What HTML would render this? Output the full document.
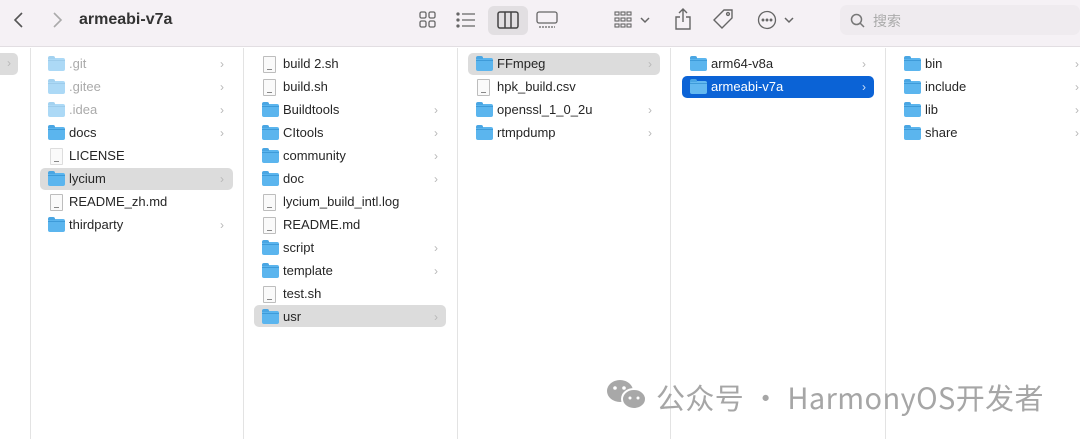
<!DOCTYPE html><html><head><meta charset="utf-8"><style>
*{margin:0;padding:0;box-sizing:border-box}
body{width:1080px;height:439px;overflow:hidden;background:#fff;font-family:"Liberation Sans","Noto Sans CJK SC",sans-serif;font-size:13px;color:#262626;position:relative}
.tb{position:absolute;left:0;top:0;width:1080px;height:47px;background:#f5f1f5;border-bottom:1px solid #e2dee2}
.col{position:absolute;top:48px;bottom:0;border-left:1px solid #e3e3e3}
.r{position:absolute;height:22px;line-height:22px;white-space:nowrap}
.sel{background:#dcdcdc;border-radius:5px}
.blue{background:#0b63d6;border-radius:5px;color:#fff}
.fd{position:absolute;width:17px;height:13px;top:5px;background:#5bb5ee;border-radius:2px}
.fd:before{content:"";position:absolute;left:0;top:-2px;width:7px;height:3px;background:#4aa6e3;border-radius:2px 2px 0 0}
.fd:after{content:"";position:absolute;left:0;top:2px;width:17px;height:1px;background:#3e9bd9}
.fl{position:absolute;width:13px;height:17px;top:3px;background:#fafafa;border:1px solid #bdbdbd;border-radius:1px}
.fl:after{content:"";position:absolute;left:3px;bottom:2px;width:5px;height:1px;background:#888}
.ch{position:absolute;color:#b8b8b8;font-size:12px}
.dim{opacity:.5}
.t{position:absolute}
</style></head><body>
<div class="tb">
<svg style="position:absolute;left:12px;top:10px" width="14" height="20"><path d="M10 3L3 10L10 17" stroke="#555" stroke-width="1.6" fill="none"/></svg>
<svg style="position:absolute;left:50px;top:10px" width="14" height="20"><path d="M4 3L11 10L4 17" stroke="#aaa" stroke-width="1.6" fill="none"/></svg>
<div style="position:absolute;left:79px;top:11px;font-size:16px;font-weight:bold;color:#333">armeabi-v7a</div>
<svg style="position:absolute;left:419px;top:11px" width="18" height="18" fill="none" stroke="#666" stroke-width="1.3"><rect x="1" y="1" width="6" height="6" rx="1.5"/><rect x="10" y="1" width="6" height="6" rx="1.5"/><rect x="1" y="10" width="6" height="6" rx="1.5"/><rect x="10" y="10" width="6" height="6" rx="1.5"/></svg>
<svg style="position:absolute;left:456px;top:11px" width="20" height="18" stroke="#666" stroke-width="1.3"><path d="M6 3H19M6 9H19M6 15H19"/><circle cx="2" cy="3" r="1" fill="#666"/><circle cx="2" cy="9" r="1" fill="#666"/><circle cx="2" cy="15" r="1" fill="#666"/></svg>
<div style="position:absolute;left:488px;top:6px;width:40px;height:29px;background:#e2dfe2;border-radius:6px"></div>
<svg style="position:absolute;left:497px;top:11px" width="22" height="18" fill="none" stroke="#444" stroke-width="1.5"><rect x="1" y="1" width="20" height="16" rx="2"/><path d="M8 1V17M14 1V17"/></svg>
<svg style="position:absolute;left:536px;top:11px" width="22" height="18" fill="none" stroke="#666" stroke-width="1.3"><rect x="1" y="1" width="20" height="11" rx="2"/><path d="M3 16H19" stroke-dasharray="2 1"/></svg>
<svg style="position:absolute;left:614px;top:11px" width="20" height="18" fill="none" stroke="#666" stroke-width="1.1"><rect x="1" y="1" width="4" height="3"/><rect x="7" y="1" width="4" height="3"/><rect x="13" y="1" width="4" height="3"/><rect x="1" y="7" width="4" height="3"/><rect x="7" y="7" width="4" height="3"/><rect x="13" y="7" width="4" height="3"/><rect x="1" y="13" width="4" height="3"/><rect x="7" y="13" width="4" height="3"/><rect x="13" y="13" width="4" height="3"/></svg>
<svg style="position:absolute;left:640px;top:16px" width="10" height="8" fill="none" stroke="#666" stroke-width="1.5"><path d="M1 2L5 6L9 2"/></svg>
<svg style="position:absolute;left:674px;top:7px" width="18" height="24" fill="none" stroke="#666" stroke-width="1.4"><path d="M9 2V15M5 6L9 2L13 6M6 10H2V22H16V10H12"/></svg>
<svg style="position:absolute;left:711px;top:8px" width="24" height="24" fill="none" stroke="#666" stroke-width="1.4"><path d="M13 2H21V10L11 20L3 12Z"/><circle cx="17" cy="6" r="1.4"/></svg>
<svg style="position:absolute;left:757px;top:10px" width="20" height="20" fill="none" stroke="#666" stroke-width="1.3"><circle cx="10" cy="10" r="8.5"/><circle cx="6" cy="10" r=".8" fill="#666"/><circle cx="10" cy="10" r=".8" fill="#666"/><circle cx="14" cy="10" r=".8" fill="#666"/></svg>
<svg style="position:absolute;left:784px;top:16px" width="10" height="8" fill="none" stroke="#666" stroke-width="1.5"><path d="M1 2L5 6L9 2"/></svg>
<div style="position:absolute;left:840px;top:5px;width:240px;height:30px;background:#efebef;border-radius:7px"></div>
<svg style="position:absolute;left:850px;top:13px" width="16" height="16" fill="none" stroke="#777" stroke-width="1.5"><circle cx="6.5" cy="6.5" r="5"/><path d="M10 10L14 14"/></svg>
<div style="position:absolute;left:873px;top:11px;font-size:14px;color:#aaa">搜索</div>
</div>
<div style="position:absolute;left:0;top:53px;width:18px;height:22px;background:#dcdcdc;border-radius:0 5px 5px 0"></div>
<div class="ch" style="left:7px;top:56px">›</div>
<div class="col" style="left:30px"></div><div class="col" style="left:243px"></div><div class="col" style="left:457px"></div><div class="col" style="left:670px"></div><div class="col" style="left:885px"></div>

<div class="r sel" style="left:40px;top:168px;width:193px"></div>
<div class="r dim" style="left:48px;top:53px"><i class="fd" style="left:0"></i><span class="t" style="left:21px;color:#555">.git</span></div><div class="ch" style="left:220px;top:57px">›</div>
<div class="r dim" style="left:48px;top:76px"><i class="fd" style="left:0"></i><span class="t" style="left:21px;color:#555">.gitee</span></div><div class="ch" style="left:220px;top:80px">›</div>
<div class="r dim" style="left:48px;top:99px"><i class="fd" style="left:0"></i><span class="t" style="left:21px;color:#555">.idea</span></div><div class="ch" style="left:220px;top:103px">›</div>
<div class="r" style="left:48px;top:122px"><i class="fd" style="left:0"></i><span class="t" style="left:21px">docs</span></div><div class="ch" style="left:220px;top:126px">›</div>
<div class="r" style="left:48px;top:145px"><i class="fl" style="left:2px;border-color:#ddd"></i><span class="t" style="left:21px">LICENSE</span></div>
<div class="r" style="left:48px;top:168px"><i class="fd" style="left:0"></i><span class="t" style="left:21px">lycium</span></div><div class="ch" style="left:220px;top:172px">›</div>
<div class="r" style="left:48px;top:191px"><i class="fl" style="left:2px"></i><span class="t" style="left:21px">README_zh.md</span></div>
<div class="r" style="left:48px;top:214px"><i class="fd" style="left:0"></i><span class="t" style="left:21px">thirdparty</span></div><div class="ch" style="left:220px;top:218px">›</div>

<div class="r sel" style="left:254px;top:305px;width:192px"></div>
<div class="r" style="left:262px;top:53px"><i class="fl" style="left:1px"></i><span class="t" style="left:21px">build 2.sh</span></div>
<div class="r" style="left:262px;top:76px"><i class="fl" style="left:1px"></i><span class="t" style="left:21px">build.sh</span></div>
<div class="r" style="left:262px;top:99px"><i class="fd" style="left:0"></i><span class="t" style="left:21px">Buildtools</span></div><div class="ch" style="left:434px;top:103px">›</div>
<div class="r" style="left:262px;top:122px"><i class="fd" style="left:0"></i><span class="t" style="left:21px">CItools</span></div><div class="ch" style="left:434px;top:126px">›</div>
<div class="r" style="left:262px;top:145px"><i class="fd" style="left:0"></i><span class="t" style="left:21px">community</span></div><div class="ch" style="left:434px;top:149px">›</div>
<div class="r" style="left:262px;top:168px"><i class="fd" style="left:0"></i><span class="t" style="left:21px">doc</span></div><div class="ch" style="left:434px;top:172px">›</div>
<div class="r" style="left:262px;top:191px"><i class="fl" style="left:1px"></i><span class="t" style="left:21px">lycium_build_intl.log</span></div>
<div class="r" style="left:262px;top:214px"><i class="fl" style="left:1px"></i><span class="t" style="left:21px">README.md</span></div>
<div class="r" style="left:262px;top:237px"><i class="fd" style="left:0"></i><span class="t" style="left:21px">script</span></div><div class="ch" style="left:434px;top:241px">›</div>
<div class="r" style="left:262px;top:260px"><i class="fd" style="left:0"></i><span class="t" style="left:21px">template</span></div><div class="ch" style="left:434px;top:264px">›</div>
<div class="r" style="left:262px;top:283px"><i class="fl" style="left:1px"></i><span class="t" style="left:21px">test.sh</span></div>
<div class="r" style="left:262px;top:306px"><i class="fd" style="left:0"></i><span class="t" style="left:21px">usr</span></div><div class="ch" style="left:434px;top:310px">›</div>

<div class="r sel" style="left:468px;top:53px;width:192px"></div>
<div class="r" style="left:476px;top:53px"><i class="fd" style="left:0"></i><span class="t" style="left:21px">FFmpeg</span></div><div class="ch" style="left:648px;top:57px">›</div>
<div class="r" style="left:476px;top:76px"><i class="fl" style="left:1px"></i><span class="t" style="left:21px">hpk_build.csv</span></div>
<div class="r" style="left:476px;top:99px"><i class="fd" style="left:0"></i><span class="t" style="left:21px">openssl_1_0_2u</span></div><div class="ch" style="left:648px;top:103px">›</div>
<div class="r" style="left:476px;top:122px"><i class="fd" style="left:0"></i><span class="t" style="left:21px">rtmpdump</span></div><div class="ch" style="left:648px;top:126px">›</div>

<div class="r blue" style="left:682px;top:76px;width:192px"></div>
<div class="r" style="left:690px;top:53px"><i class="fd" style="left:0"></i><span class="t" style="left:21px">arm64-v8a</span></div><div class="ch" style="left:862px;top:57px">›</div>
<div class="r" style="left:690px;top:76px;color:#fff"><i class="fd" style="left:0;background:#63b9f0"></i><span class="t" style="left:21px">armeabi-v7a</span></div><div class="ch" style="left:862px;top:80px;color:#cfe0f7">›</div>

<div class="r" style="left:904px;top:53px"><i class="fd" style="left:0"></i><span class="t" style="left:21px">bin</span></div><div class="ch" style="left:1075px;top:57px">›</div>
<div class="r" style="left:904px;top:76px"><i class="fd" style="left:0"></i><span class="t" style="left:21px">include</span></div><div class="ch" style="left:1075px;top:80px">›</div>
<div class="r" style="left:904px;top:99px"><i class="fd" style="left:0"></i><span class="t" style="left:21px">lib</span></div><div class="ch" style="left:1075px;top:103px">›</div>
<div class="r" style="left:904px;top:122px"><i class="fd" style="left:0"></i><span class="t" style="left:21px">share</span></div><div class="ch" style="left:1075px;top:126px">›</div>

<svg style="position:absolute;left:605px;top:377px" width="44" height="36"><ellipse cx="15" cy="14" rx="13" ry="11" fill="#a8a8a8"/><ellipse cx="29" cy="22" rx="12" ry="10" fill="#a8a8a8" stroke="#fff" stroke-width="2"/><circle cx="10" cy="11" r="1.8" fill="#fff"/><circle cx="19" cy="11" r="1.8" fill="#fff"/><circle cx="25" cy="21" r="1.5" fill="#fff"/><circle cx="33" cy="21" r="1.5" fill="#fff"/></svg>
<div style="position:absolute;left:656px;top:376px;font-size:29px;color:#a6a6a6;font-family:'Noto Sans CJK SC','Liberation Sans',sans-serif;white-space:nowrap;letter-spacing:0.4px">公众号 · HarmonyOS开发者</div>
</body></html>
